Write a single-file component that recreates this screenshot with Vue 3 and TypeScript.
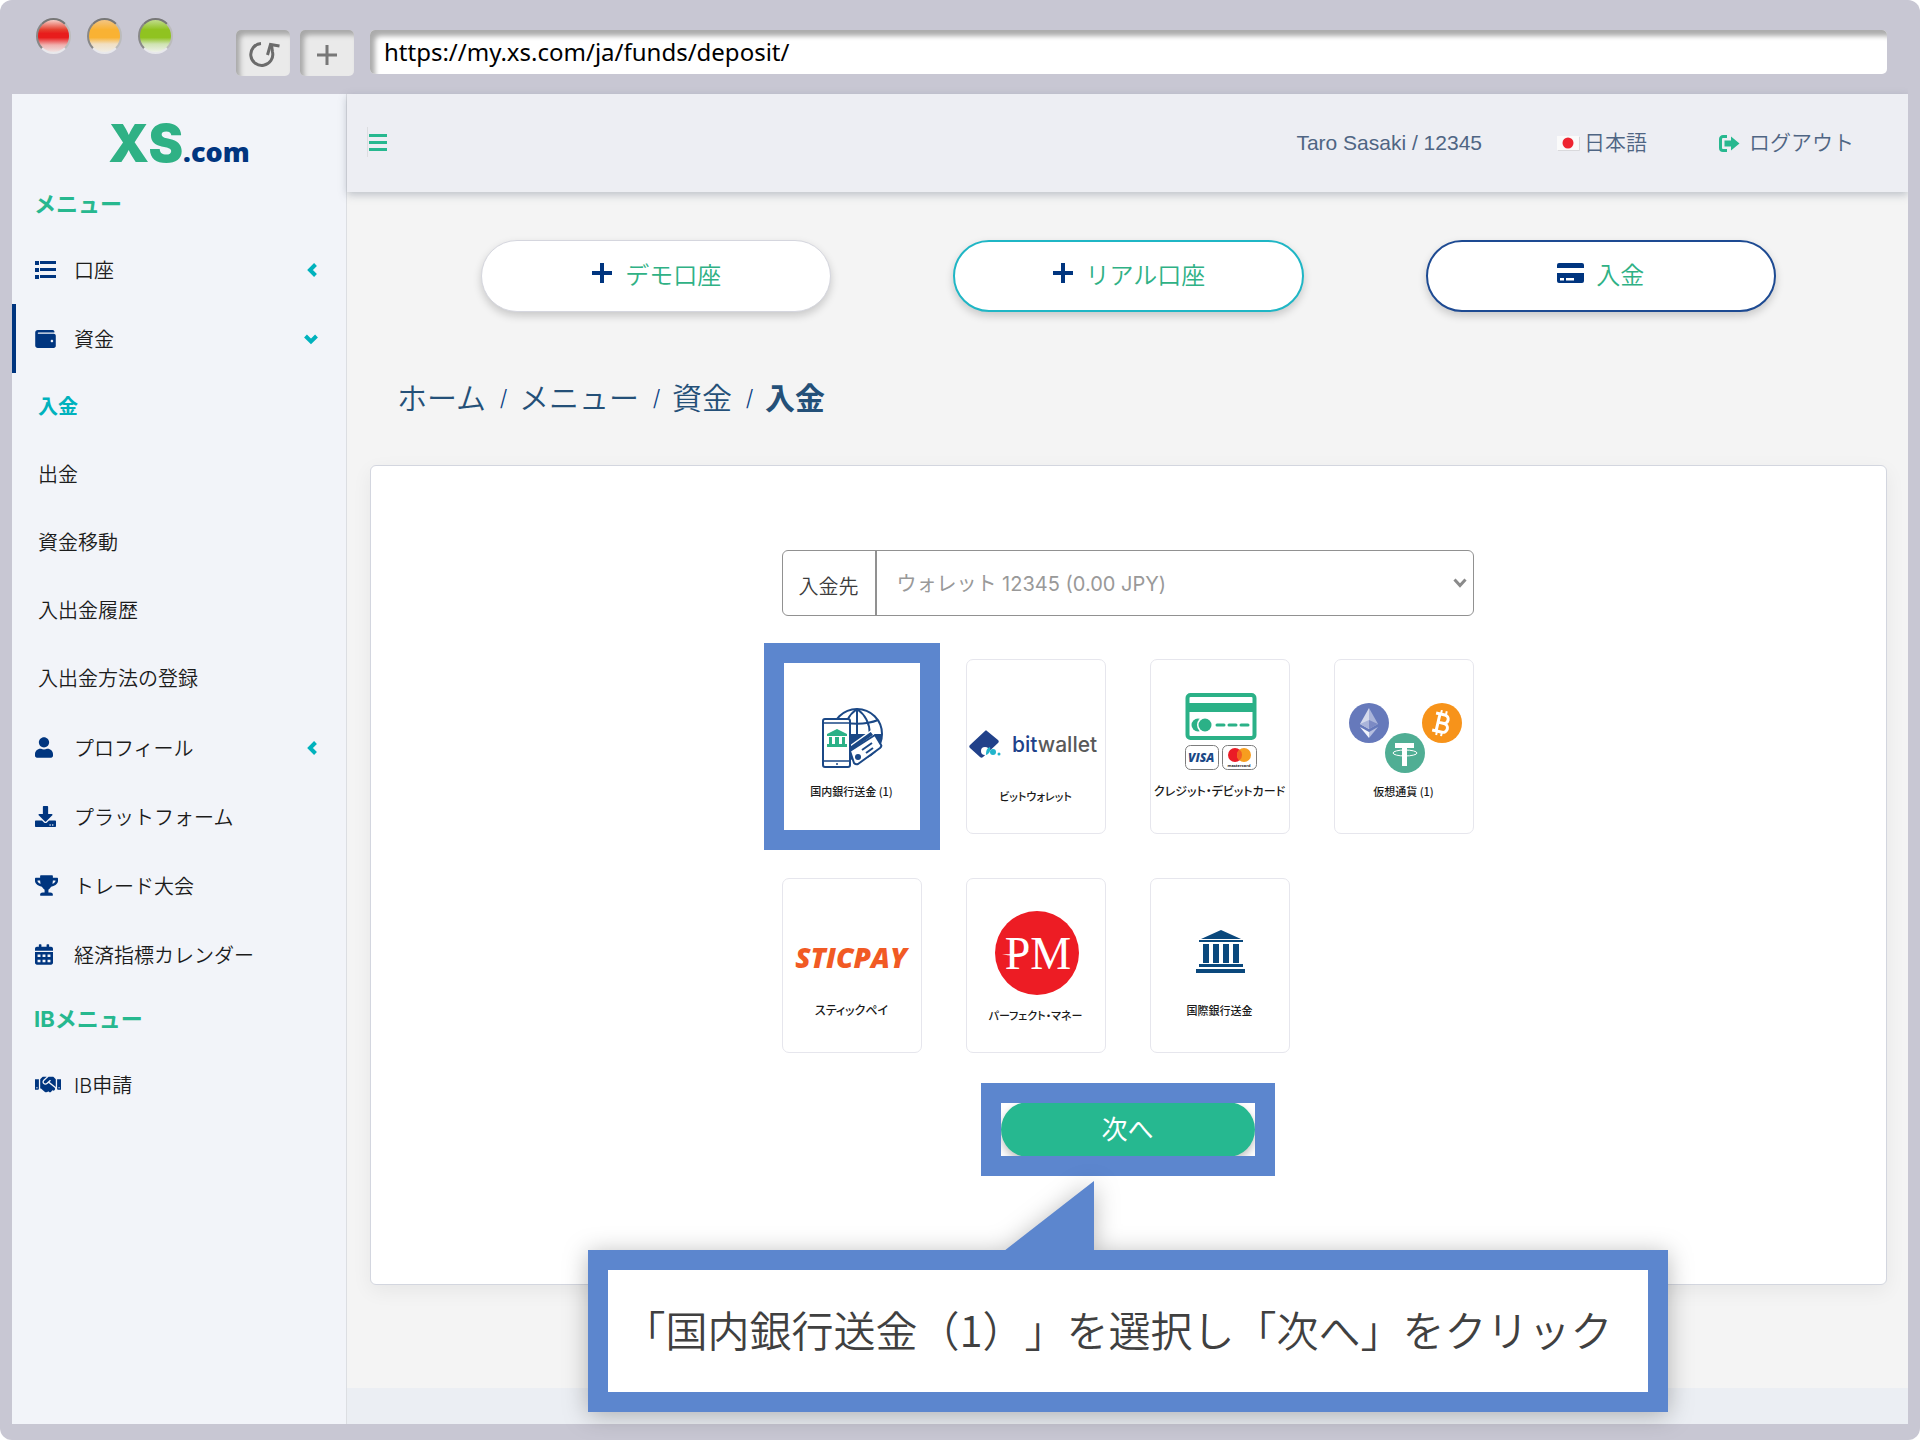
<script setup lang="ts">
import { ref } from 'vue'

interface Icon {
  box: string
  width: number
  height: number
  path: string
}

interface MenuItem {
  label: string
  icon: keyof typeof icons
  arrow?: 'left' | 'down'
  children?: string[]
}

const icons: Record<string, Icon> = {
  list: {
    box: '0 0 21 18',
    width: 21,
    height: 18,
    path: 'M0 0h4v4H0zM0 7h4v4H0zM0 14h4v4H0zM5 0h16v3H5zM5 7h16v3H5zM5 14h16v3H5z',
  },
  wallet: {
    box: '0 32 512 448',
    width: 21,
    height: 18,
    path: 'M461.2 128H80c-8.84 0-16-7.16-16-16s7.16-16 16-16h384c8.84 0 16-7.16 16-16 0-26.51-21.49-48-48-48H64C28.65 32 0 60.65 0 96v320c0 35.35 28.65 64 64 64h397.2c28.02 0 50.8-21.53 50.8-48V176c0-26.47-22.78-48-50.8-48zM416 336c-17.67 0-32-14.33-32-32s14.33-32 32-32 32 14.33 32 32-14.33 32-32 32z',
  },
  user: {
    box: '0 0 448 512',
    width: 18,
    height: 21,
    path: 'M224 256c70.7 0 128-57.3 128-128S294.7 0 224 0 96 57.3 96 128s57.3 128 128 128zm89.6 32h-16.7c-22.2 10.2-46.9 16-72.9 16s-50.6-5.8-72.9-16h-16.7C60.2 288 0 348.2 0 422.4V464c0 26.5 21.5 48 48 48h352c26.5 0 48-21.5 48-48v-41.6c0-74.2-60.2-134.4-134.4-134.4z',
  },
  download: {
    box: '0 0 512 512',
    width: 21,
    height: 21,
    path: 'M216 0h80c13.3 0 24 10.7 24 24v168h87.7c17.8 0 26.7 21.5 14.1 34.1L269.7 378.3c-7.5 7.5-19.8 7.5-27.3 0L90.1 226.1c-12.6-12.6-3.7-34.1 14.1-34.1H192V24c0-13.3 10.7-24 24-24zm296 376v112c0 13.3-10.7 24-24 24H24c-13.3 0-24-10.7-24-24V376c0-13.3 10.7-24 24-24h146.7l49 49c20.1 20.1 52.5 20.1 72.6 0l49-49H488c13.3 0 24 10.7 24 24zm-124 88c0-11-9-20-20-20s-20 9-20 20 9 20 20 20 20-9 20-20zm64 0c0-11-9-20-20-20s-20 9-20 20 9 20 20 20 20-9 20-20z',
  },
  trophy: {
    box: '0 0 576 512',
    width: 23,
    height: 21,
    path: 'M552 64H448V24c0-13.3-10.7-24-24-24H152c-13.3 0-24 10.7-24 24v40H24C10.7 64 0 74.7 0 88v56c0 35.7 22.5 72.4 61.9 100.7 31.5 22.7 69.8 37.1 110 41.7C203.3 338.5 240 360 240 360v72h-48c-35.3 0-64 20.7-64 56v12c0 6.6 5.4 12 12 12h296c6.6 0 12-5.4 12-12v-12c0-35.3-28.7-56-64-56h-48v-72s36.7-21.5 68.1-73.6c40.3-4.6 78.6-19 110-41.7 39.3-28.3 61.9-65 61.9-100.7V88c0-13.3-10.7-24-24-24zM99.3 192.8C74.9 175.2 64 155.6 64 144v-16h64.2c1 32.6 5.8 61.2 12.8 86.2-15.1-5.2-29.2-12.4-41.7-21.4zM512 144c0 16.1-17.7 36.1-35.3 48.8-12.5 9-26.7 16.2-41.8 21.4 7-25 11.8-53.6 12.8-86.2H512v16z',
  },
  calendar: {
    box: '0 0 448 512',
    width: 18,
    height: 21,
    path: 'M0 464c0 26.5 21.5 48 48 48h352c26.5 0 48-21.5 48-48V192H0zM64 256h72v64H64zM188 256h72v64h-72zM312 256h72v64h-72zM64 384h72v64H64zM188 384h72v64h-72zM312 384h72v64h-72zM400 64h-48V16c0-8.8-7.2-16-16-16h-32c-8.8 0-16 7.2-16 16v48H160V16c0-8.8-7.2-16-16-16h-32c-8.8 0-16 7.2-16 16v48H48C21.5 64 0 85.5 0 112v48h448v-48c0-26.5-21.5-48-48-48z',
  },
  handshake: {
    box: '0 0 640 512',
    width: 26,
    height: 21,
    path: 'M434.7 64h-85.9c-8 0-15.7 3-21.6 8.4l-98.3 90c-.1.1-.2.3-.3.4-16.6 15.6-16.3 40.5-2.1 56 12.7 13.9 39.4 17.6 56.1 2.7.1-.1.3-.1.4-.2l79.9-73.2c6.5-5.9 16.7-5.5 22.6 1 6 6.5 5.5 16.6-1 22.6l-26.1 23.9L504 313.8c2.9 2.4 5.5 5 7.9 7.7V128l-54.6-54.6c-5.9-6-14.1-9.4-22.6-9.4zM544 128.2v223.9c0 17.7 14.3 32 32 32h64V128.2h-96zm48 223.9c-8.8 0-16-7.2-16-16s7.2-16 16-16 16 7.2 16 16-7.2 16-16 16zM0 384h64c17.7 0 32-14.3 32-32V128.2H0V384zm48-63.9c8.8 0 16 7.2 16 16s-7.2 16-16 16-16-7.2-16-16c0-8.9 7.2-16 16-16zm435.9 18.6L334.6 217.5l-30 27.5c-29.7 27.1-75.2 24.5-101.7-4.4-26.9-29.4-24.8-74.9 4.4-101.7L289.1 64h-83.8c-8.5 0-16.6 3.4-22.6 9.4L128 128v223.9h18.3l90.5 81.9c27.4 22.3 67.7 18.1 90-9.3l.2-.2 17.9 15.5c15.9 13 39.4 10.5 52.3-5.4l31.4-38.6 5.4 4.4c13.7 11.1 33.9 9.1 45-4.7l9.5-11.7c11.2-13.8 9.1-33.9-4.6-45.1z',
  },
}

const sections: { title: string; items: MenuItem[] }[] = [
  {
    title: 'メニュー',
    items: [
      { label: '口座', icon: 'list', arrow: 'left' },
      {
        label: '資金',
        icon: 'wallet',
        arrow: 'down',
        children: ['入金', '出金', '資金移動', '入出金履歴', '入出金方法の登録'],
      },
      { label: 'プロフィール', icon: 'user', arrow: 'left' },
      { label: 'プラットフォーム', icon: 'download' },
      { label: 'トレード大会', icon: 'trophy' },
      { label: '経済指標カレンダー', icon: 'calendar' },
    ],
  },
  { title: 'IBメニュー', items: [{ label: 'IB申請', icon: 'handshake' }] },
]

const crumbs = ['ホーム', 'メニュー', '資金']

const methods = [
  { id: 'bank', label: '国内銀行送金 (1)', kanji: true, tall: false },
  { id: 'bitwallet', label: 'ビットウォレット', kanji: false, tall: true },
  { id: 'card', label: 'クレジット・デビットカード', kanji: false, tall: false },
  { id: 'crypto', label: '仮想通貨 (1)', kanji: true, tall: false },
  { id: 'sticpay', label: 'スティックペイ', kanji: false, tall: false },
  { id: 'perfect', label: 'パーフェクト・マネー', kanji: false, tall: true },
  { id: 'wire', label: '国際銀行送金', kanji: true, tall: false },
]

const address = ref('https://my.xs.com/ja/funds/deposit/')
const selected = ref('bank')
</script>

<template>
  <div class="browser">
    <div class="chrome">
      <div class="lights">
        <span class="light red"></span>
        <span class="light amber"></span>
        <span class="light green"></span>
      </div>
      <div class="tools">
        <button type="button" class="tool" aria-label="再読み込み">
          <svg width="34" height="30" viewBox="-1 0 34 30" fill="none" stroke="#6b6b6b" stroke-width="3">
            <path d="M14 3.5A11 11 0 1 0 25.500 12L24.500 5" />
            <path d="M20.500 15l3-10.500 9 1.500" />
          </svg>
        </button>
        <button type="button" class="tool" aria-label="新しいタブ">
          <svg width="22" height="22" viewBox="0 0 22 22" stroke="#777" stroke-width="3"><path d="M11 1v20M1 11h20" /></svg>
        </button>
      </div>
      <input v-model="address" class="address" type="text" aria-label="アドレス" />
    </div>

    <div class="site">
      <aside class="sidebar">
        <a class="logo" href="#" aria-label="XS.com"><span class="logo-xs">XS</span><span class="logo-com">.com</span></a>
        <nav v-for="section in sections" :key="section.title">
          <h2 class="menu-title">{{ section.title }}</h2>
          <template v-for="item in section.items" :key="item.label">
            <a href="#" class="menu-item" :class="{ open: item.children }">
              <span class="menu-icon">
                <svg :width="icons[item.icon].width" :height="icons[item.icon].height" :viewBox="icons[item.icon].box">
                  <path :d="icons[item.icon].path" fill="#00357f" fill-rule="evenodd" />
                </svg>
              </span>
              <span class="menu-label">{{ item.label }}</span>
              <svg v-if="item.arrow" class="menu-arrow" width="14" height="14" viewBox="0 0 14 14" fill="none" stroke="#00b2bd" stroke-width="4">
                <path v-if="item.arrow === 'left'" d="M11.500 1.500L6 7l5.500 5.500" />
                <path v-else d="M1.500 4L7 9.500 12.500 4" />
              </svg>
            </a>
            <a v-for="(child, i) in item.children" :key="child" href="#" class="sub-item" :class="{ current: i === 0 }">{{ child }}</a>
          </template>
        </nav>
      </aside>

      <div class="content">
        <header class="topbar">
          <button type="button" class="burger" aria-label="メニューを開閉">
            <svg width="18" height="18" viewBox="0 0 18 18" fill="#27b88f"><path d="M0 1h18v3H0zM0 8h18v3H0zM0 15h18v3H0z" /></svg>
          </button>
          <span class="account">Taro Sasaki / 12345</span>
          <a href="#" class="language">
            <svg width="24" height="16" viewBox="0 0 24 16"><path d="M1 1h22v14H1z" fill="#fafafa" /><path d="M2 15.500h21.500V2" fill="none" stroke="#d9d9dc" /><circle cx="12" cy="8" r="5.500" fill="#ee2430" /></svg>
            日本語
          </a>
          <a href="#" class="logout">
            <svg width="21" height="17" viewBox="0 0 21 17">
              <path d="M8 1.500H4A2.500 2.500 0 0 0 1.500 4v9A2.500 2.500 0 0 0 4 15.500h4" fill="none" stroke="#27b88f" stroke-width="3" />
              <path d="M5.500 5.500H12V1.500l8.500 7-8.500 7v-4H5.500z" fill="#27b88f" />
            </svg>
            ログアウト
          </a>
        </header>

        <main class="main">
          <div class="shortcuts">
            <button type="button" class="pill">
              <svg width="22" height="22" viewBox="0 0 22 22"><path d="M9 1h4v8h8v4h-8v8H9v-8H1V9h8z" fill="#00357f" /></svg>
              デモ口座
            </button>
            <button type="button" class="pill teal">
              <svg width="22" height="22" viewBox="0 0 22 22"><path d="M9 1h4v8h8v4h-8v8H9v-8H1V9h8z" fill="#00357f" /></svg>
              リアル口座
            </button>
            <button type="button" class="pill navy">
              <svg width="27" height="22" viewBox="0 0 27 22">
                <path d="M2 1h23a2 2 0 0 1 2 2v3H0V3a2 2 0 0 1 2-2zM0 11h27v8a2 2 0 0 1-2 2H2a2 2 0 0 1-2-2zM3 16v2.500h4V16zm6 0v2.500h8V16z" fill="#00357f" fill-rule="evenodd" />
              </svg>
              入金
            </button>
          </div>

          <nav class="crumbs" aria-label="パンくず">
            <template v-for="crumb in crumbs" :key="crumb">
              <a href="#">{{ crumb }}</a><span class="slash">/</span>
            </template>
            <strong>入金</strong>
          </nav>

          <section class="panel">
            <div class="target">
              <label for="wallet">入金先</label>
              <div class="target-field">
                <select id="wallet">
                  <option>ウォレット 12345 (0.00 JPY)</option>
                </select>
                <svg class="caret" width="14" height="10" viewBox="0 0 14 10" fill="none" stroke="#8a8a8a" stroke-width="3"><path d="M1.500 1.500L7 7.500l5.500-6" /></svg>
              </div>
            </div>

            <div class="methods">
              <button
                v-for="method in methods"
                :key="method.id"
                type="button"
                class="method"
                :class="{ marked: selected === method.id, tall: method.tall }"
                :aria-pressed="selected === method.id"
                @click="selected = method.id"
              >
                <svg v-if="method.id === 'bank'" class="art" width="138" height="122" viewBox="0 0 138 122">
                  <g fill="none" stroke="#1b4886" stroke-width="2">
                    <circle cx="74" cy="74" r="25" />
                    <path d="M74 49v50M53 60c12 5 30 5 42 0M74 49c-17 12-17 38 0 50M74 49c17 12 17 38 0 50" />
                  </g>
                  <path d="M66 74h33a25 25 0 0 1-7 17L68 99z" fill="#1b4886" />
                  <path d="M67 86L88 71l3 4-24 17z" fill="#1b4886" stroke="#fff" stroke-width="1.500" />
                  <path d="M67 91L92 75l6 10c1 1 0 2-1 3L75 104c-2 1-3 0-4-1z" fill="#fff" stroke="#1b4886" stroke-width="2" stroke-linejoin="round" />
                  <path d="M79 90l10-7M83 93l7-5" stroke="#1b4886" stroke-width="2" />
                  <circle cx="75" cy="97" r="3" fill="#1b4886" />
                  <rect x="40" y="59" width="27" height="48" rx="2" fill="#fff" stroke="#1b4886" stroke-width="2" />
                  <path d="M40 63h27M40 101h27" stroke="#1b4886" stroke-width="1.500" />
                  <circle cx="54" cy="104" r="1" fill="#1b4886" />
                  <path d="M54 69l10 5v2H44v-2zM46 77h3v7h-3zM52 77h4v7h-4zM59 77h3v7h-3zM44 84h20v3H44z" fill="#2bb187" />
                </svg>

                <svg v-else-if="method.id === 'bitwallet'" class="art" width="138" height="127" viewBox="0 0 138 127">
                  <path d="M20 71l11 9c1 1 1 2 0 3L16 97c-1 1-2 1-3 0L3 88c-1-1-1-2 0-3l15-14c1-1 1-1 2 0z" fill="#21418a" />
                  <circle cx="18" cy="91" r="4" fill="#fff" />
                  <path d="M23 87c-3 1-4 3-4 8 3-1 5-4 4-8z" fill="#21b4cb" />
                  <circle cx="26" cy="92" r="3" fill="#21b4cb" />
                  <circle cx="32" cy="94" r="1.500" fill="#21b4cb" />
                  <text x="45" y="92" class="bitwallet"><tspan fill="#21418a">bit</tspan><tspan fill="#595959">wallet</tspan></text>
                </svg>

                <svg v-else-if="method.id === 'card'" class="art" width="138" height="122" viewBox="0 0 138 122">
                  <rect x="36.500" y="35" width="67" height="43" rx="3" fill="#fff" stroke="#2bb187" stroke-width="4" />
                  <path d="M36 43h68v9H36z" fill="#2bb187" />
                  <circle cx="47" cy="65" r="6.500" fill="#2bb187" />
                  <circle cx="54" cy="65" r="8" fill="#fff" />
                  <circle cx="54" cy="65" r="6.500" fill="#2bb187" />
                  <path d="M66 65h7M78 65h7M90 65h7" stroke="#2bb187" stroke-width="3" stroke-linecap="round" />
                  <rect x="34.500" y="85.500" width="33" height="24" rx="5" fill="#fff" stroke="#7d7d7d" />
                  <rect x="71.500" y="85.500" width="34" height="24" rx="5" fill="#fff" stroke="#7d7d7d" />
                  <text x="37" y="102" class="visa">VISA</text>
                  <circle cx="84" cy="95" r="7" fill="#eb1c26" />
                  <circle cx="93" cy="95" r="7" fill="#f79e1f" />
                  <path d="M88.500 89.600a7 7 0 0 1 0 10.800 7 7 0 0 1 0-10.800z" fill="#f26122" />
                  <text x="88" y="107" class="mastercard" text-anchor="middle">mastercard</text>
                </svg>

                <svg v-else-if="method.id === 'crypto'" class="art" width="138" height="122" viewBox="0 0 138 122">
                  <circle cx="34" cy="63" r="20" fill="#6679bb" />
                  <path d="M34 48l-9 16 9 5z" fill="#d5daec" /><path d="M34 48l9 16-9 5z" fill="#aab4da" />
                  <path d="M25 64l9-4v9z" fill="#aab4da" /><path d="M43 64l-9-4v9z" fill="#7c8ac4" />
                  <path d="M25 67l9 11v-6z" fill="#f2f4fb" /><path d="M43 67l-9 11v-6z" fill="#b6bfe0" />
                  <circle cx="107" cy="63" r="20" fill="#f7931a" />
                  <g transform="rotate(13 107 63)" fill="none" stroke="#fff" stroke-width="3">
                    <path d="M99 54.500h9a4 4 0 0 1 0 8.500h-5h6a4.500 4.500 0 0 1 0 9H99M103 54v18" />
                    <path d="M104 50.500v4M109 50.500v4M104 72v4M109 72v4" stroke-width="2" />
                  </g>
                  <circle cx="70" cy="93" r="20" fill="#50ae94" />
                  <path d="M60 83h19v5h-7v18h-5V88h-7z" fill="#fff" />
                  <ellipse cx="70" cy="93" rx="12" ry="3" fill="none" stroke="#fff" />
                </svg>

                <svg v-else-if="method.id === 'sticpay'" class="art" width="138" height="122" viewBox="0 0 138 122">
                  <text x="68" y="89" class="sticpay" text-anchor="middle">STICPAY</text>
                </svg>

                <svg v-else-if="method.id === 'perfect'" class="art" width="138" height="127" viewBox="0 0 138 127">
                  <circle cx="70" cy="74" r="42" fill="#ed1c24" />
                  <text x="71" y="90" class="perfect" text-anchor="middle">PM</text>
                  <path d="M35 75c10 3 22 2 27-3-5 2-16 4-27 3z" fill="#fff" />
                </svg>

                <svg v-else class="art" width="138" height="122" viewBox="0 0 138 122">
                  <path d="M70 51l20 9H50zM48 61h44v2H48zM52 65h6v19h-6zM62 65h6v19h-6zM72 65h6v19h-6zM82 65h6v19h-6zM48 85h44v3H48zM45 90h49v4H45z" fill="#0a487c" />
                </svg>

                <span class="method-name" :class="{ kana: !method.kanji }">{{ method.label }}</span>
              </button>
            </div>

            <div class="next-area">
              <button type="button" class="next">次へ</button>
              <div class="callout">
                <svg class="tail" width="90" height="70" viewBox="0 0 90 70"><path d="M90 0v70H0z" fill="#5c86ce" /></svg>
                <p>「国内銀行送金（1）」を選択し「次へ」をクリック</p>
              </div>
            </div>
          </section>
        </main>
        <footer class="footer"></footer>
      </div>
    </div>
  </div>
</template>

<style>
body {
  margin: 0;
  background: #fff;
}
</style>

<style scoped>
* {
  box-sizing: border-box;
}
a {
  color: inherit;
  text-decoration: none;
}
button {
  border: 0;
  padding: 0;
  background: none;
  font: inherit;
  color: inherit;
}
svg {
  display: block;
  flex: none;
}
.browser {
  display: flex;
  flex-direction: column;
  min-height: 100vh;
  padding: 0 12px 16px;
  border-radius: 12px;
  background: #c8c7d3;
  font-family: Inter, 'Noto Sans CJK JP', sans-serif;
}

/* window chrome */
.chrome {
  display: flex;
  height: 94px;
  padding: 18px 21px 0 24px;
}
.lights {
  display: flex;
  gap: 16px;
  width: 200px;
}
.light {
  width: 35px;
  height: 36px;
  border: 2px solid;
  border-color: #777 #bbb #e8e8ec #888;
  border-radius: 50%;
}
.red {
  background: linear-gradient(#f6cfc8, #e5402f 30%, #e81c1c 42%, #e81c1c 55%, #f0b0ae 78%, #efe3e3);
}
.amber {
  background: linear-gradient(#f3c583, #f9b233 30%, #f9b233 55%, #f1dfc2 75%, #efece4);
}
.green {
  background: linear-gradient(#c0dc8c, #90c320 30%, #90c320 55%, #cfe3b2 75%, #eef1e8);
}
.tools {
  display: flex;
  gap: 10px;
  padding-top: 12px;
}
.tool {
  display: flex;
  align-items: center;
  justify-content: center;
  width: 54px;
  height: 46px;
  border-radius: 5px;
  background: #eaeaea;
  box-shadow: inset 4px 5px 5px #a8a8a8;
}
.tool svg {
  margin-top: 3px;
}
.address {
  flex: 1;
  min-width: 0;
  height: 44px;
  margin: 12px 0 0 16px;
  padding: 0 14px 2px;
  border: 0;
  border-radius: 5px;
  background: #fff;
  box-shadow: inset 5px 6px 5px #acacac;
  font: 24px 'Noto Sans', 'Noto Sans CJK JP', sans-serif;
  color: #000;
}

/* sidebar */
.site {
  display: flex;
  flex: 1;
  overflow-x: clip;
  background: #f4f4f4;
}
.sidebar {
  flex: none;
  width: 335px;
  border-right: 1px solid #dcdee2;
  background: #f2f4f9;
}
.logo {
  display: flex;
  align-items: baseline;
  justify-content: center;
  height: 80px;
  padding-top: 18px;
}
.logo-xs {
  font: 900 52px/64px Inter, sans-serif;
  color: #2fb185;
}
.logo-com {
  font: 800 27px/64px 'Open Sans', sans-serif;
  color: #00357f;
}
.menu-title {
  margin: 0;
  padding-left: 22px;
  font-size: 22px;
  line-height: 61px;
  font-weight: 700;
  color: #27b88f;
}
.menu-item {
  display: flex;
  align-items: center;
  height: 69px;
  padding: 0 28px 0 19px;
  border-left: 4px solid transparent;
  font-size: 20px;
  color: #1c1c1c;
}
.menu-item.open {
  border-left-color: #00357f;
}
.menu-icon {
  width: 39px;
}
.menu-label {
  flex: 1;
  font-weight: 350;
}
.sub-item {
  display: block;
  padding-left: 26px;
  font-size: 20px;
  font-weight: 350;
  line-height: 68px;
  color: #1c1c1c;
}
.sub-item.current {
  font-weight: 700;
  color: #00b2bd;
}

/* top bar */
.content {
  display: flex;
  flex: 1;
  flex-direction: column;
  min-width: 0;
}
.topbar {
  display: flex;
  align-items: center;
  height: 98px;
  padding: 0 54px 0 20px;
  background: #edeef3;
  box-shadow: 0 3px 8px rgba(90, 100, 120, 0.35);
  font: 21px/30px 'Liberation Sans', 'Noto Sans CJK JP', sans-serif;
  font-weight: 350;
  color: #4f6583;
}
.burger {
  margin-bottom: 2px;
  padding: 6px 0 6px 1px;
  border-left: 1px solid #dcdde0;
}
.account {
  margin-left: auto;
}
.language {
  display: flex;
  align-items: center;
  gap: 4px;
  margin-left: 74px;
}
.logout {
  display: flex;
  align-items: center;
  gap: 9px;
  margin-left: 72px;
}

/* main column */
.main {
  padding: 48px 21px 0 23px;
}
.shortcuts {
  display: grid;
  grid-template-columns: repeat(3, 1fr);
  gap: 122px;
  padding: 0 111px;
}
.pill {
  display: flex;
  align-items: center;
  justify-content: center;
  gap: 12px;
  height: 72px;
  padding-bottom: 6px;
  border: 1px solid #d5d6de;
  border-radius: 36px;
  background: #fff;
  box-shadow: 0 4px 8px rgba(0, 0, 0, 0.18);
  font-size: 24px;
  font-weight: 350;
  color: #2fb185;
}
.pill.teal {
  border: 2px solid #1fb6c5;
}
.pill.navy {
  border: 2px solid #1d4a92;
}
.crumbs {
  display: flex;
  align-items: center;
  margin: 64px 0 45px 27px;
  font-size: 30px;
  font-weight: 350;
  line-height: 44px;
  color: #245078;
}
.slash {
  width: 33px;
  padding-left: 2px;
  font-size: 22px;
  text-align: center;
  color: #0a4184;
}
.panel {
  display: flex;
  flex-direction: column;
  align-items: center;
  padding: 84px 22px 127px 20px;
  border: 1px solid #d3d6df;
  border-radius: 6px;
  background: #fff;
  box-shadow: 0 6px 20px rgba(0, 0, 0, 0.06);
}
.target {
  display: flex;
  width: 692px;
  height: 66px;
  border: 1px solid #919191;
  border-radius: 6px;
}
.target label {
  width: 92px;
  padding-top: 6px;
  font-size: 20px;
  font-weight: 350;
  line-height: 60px;
  text-align: center;
  color: #3c3c3c;
}
.target-field {
  display: flex;
  flex: 1;
  align-items: center;
  border-left: 2px solid #919191;
  padding-right: 6px;
}
.target select {
  flex: 1;
  height: 64px;
  padding: 2px 20px 0;
  border: 0;
  background: none;
  appearance: none;
  font: 400 20px Inter, 'Noto Sans CJK JP', sans-serif;
  color: #999;
}
.methods {
  display: grid;
  grid-template-columns: repeat(4, 140px);
  gap: 44px;
  margin-top: 43px;
}
.method {
  position: relative;
  display: flex;
  flex-direction: column;
  align-items: center;
  height: 175px;
  border: 1px solid #e6e6ed;
  border-radius: 7px;
  background: #fff;
}
.method.marked::after,
.next::after {
  position: absolute;
  inset: -17px -19px;
  border: 20px solid #5c86ce;
  content: '';
}
.method-name {
  font: 500 11px/18px 'Noto Sans CJK JP', sans-serif;
  white-space: nowrap;
  color: #1a1a1a;
}
.method-name.kana {
  font-size: 12px;
  font-feature-settings: 'palt';
}
.tall .method-name {
  font-size: 11px;
}
.bitwallet {
  font: 500 21px Inter, sans-serif;
}
.visa {
  font: italic 800 12px 'Open Sans', sans-serif;
  fill: #1b4886;
}
.mastercard {
  font: 700 4px 'Open Sans', sans-serif;
  fill: #222;
}
.sticpay {
  font: italic 800 28px 'Open Sans', sans-serif;
  fill: #f15a24;
}
.perfect {
  font: 46px 'Liberation Serif', serif;
  fill: #fff;
}
.next-area {
  position: relative;
  margin-top: 49px;
}
.next {
  position: relative;
  display: block;
  width: 254px;
  height: 55px;
  border-radius: 28px;
  background: #26b890;
  box-shadow: 0 4px 8px rgba(0, 0, 0, 0.25);
  font-size: 26px;
  line-height: 52px;
  color: #fff;
}
.next::after {
  inset: -19px -20px;
}
.callout {
  position: absolute;
  top: 148px;
  left: 50%;
  width: 1080px;
  border: 20px solid #5c86ce;
  background: #fff;
  transform: translateX(-50%);
  filter: drop-shadow(0 3px 12px rgba(0, 0, 0, 0.28));
}
.callout p {
  margin: 0;
  padding: 0 0 4px 16px;
  font: 42px/118px 'Noto Sans CJK JP', sans-serif;
  font-weight: 350;
  text-spacing-trim: space-all;
  white-space: nowrap;
  color: #404040;
}
.tail {
  position: absolute;
  bottom: 141px;
  left: 396px;
}
.footer {
  height: 36px;
  margin-top: auto;
  background: #ebeef3;
}
</style>
